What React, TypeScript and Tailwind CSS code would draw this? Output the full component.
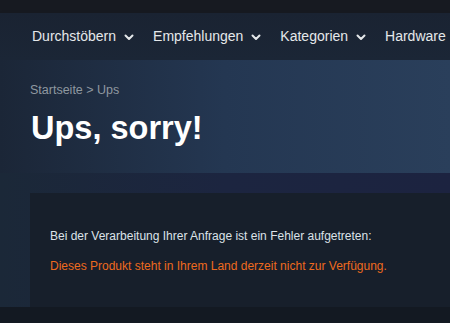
import React from "react";

function Chevron() {
  return (
    <svg width="10" height="7" viewBox="0 0 10 7" className="ml-[8px] mt-[1px]">
      <path d="M1.5 1.5 L5 5 L8.5 1.5" fill="none" stroke="#e5e8ea" strokeWidth="2" strokeLinecap="round" strokeLinejoin="round" />
    </svg>
  );
}

function NavItem({ label, chevron = true }: { label: string; chevron?: boolean }) {
  return (
    <div className="flex items-center mr-[19px] text-[14px] text-[#e5e8ea] whitespace-nowrap">
      <span>{label}</span>
      {chevron && <Chevron />}
    </div>
  );
}

export default function App() {
  return (
    <div className="w-[450px] h-[323px] overflow-hidden bg-[#131922] font-['Liberation_Sans',Arial,sans-serif]">
      <div className="h-[13px] bg-[#171a21]" />
      <div className="h-[47px] bg-gradient-to-b from-[#1a2332] to-[#1b2636] flex items-center pl-[32px] shadow-[0_2px_4px_rgba(0,0,0,0.25)]">
        <NavItem label="Durchstöbern" />
        <NavItem label="Empfehlungen" />
        <NavItem label="Kategorien" />
        <NavItem label="Hardware" chevron={false} />
      </div>
      <div className="h-[113px] bg-gradient-to-r from-[#1b2637] via-[#243752] to-[#2a3f5b] pl-[30px] pt-[22px]">
        <div className="text-[12.5px] leading-[16px] text-[#8f98a0]">Startseite &gt; Ups</div>
        <div className="mt-[12px] ml-[1px] text-[32.5px] leading-[36px] font-bold text-white">Ups, sorry!</div>
      </div>
      <div className="bg-gradient-to-r from-[#1b2838] via-[#1c2540] to-[#1c2340] pt-[20px]">
        <div className="ml-[30px] h-[114px] bg-[#171f2b] pl-[20px] pt-[35px] text-[12px] leading-[16px]">
          <div className="text-[#dce2e8]">Bei der Verarbeitung Ihrer Anfrage ist ein Fehler aufgetreten:</div>
          <div className="mt-[14px] text-[#ee6a1e]">Dieses Produkt steht in Ihrem Land derzeit nicht zur Verfügung.</div>
        </div>
      </div>
      <div className="h-[16px] bg-[#131922]" />
    </div>
  );
}
